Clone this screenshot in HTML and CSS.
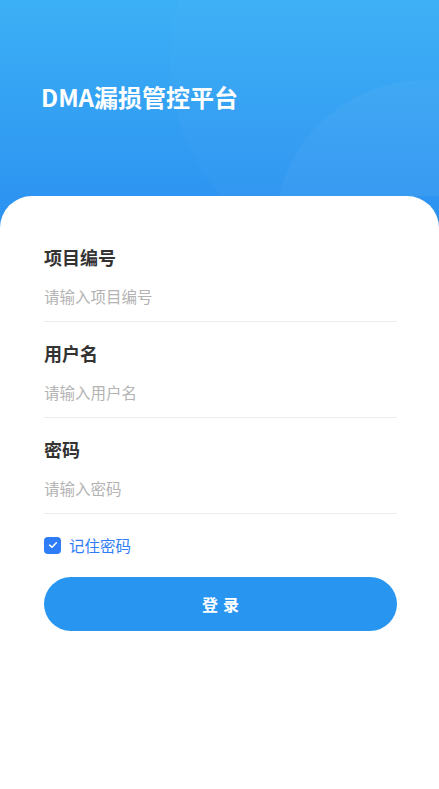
FILE: index.html
```html
<!DOCTYPE html>
<html lang="zh-CN">

<head>
    <meta charset="UTF-8">
    <meta name="viewport" content="width=device-width, initial-scale=1.0">
    <title>DMA漏损管控平台</title>
    <link rel="stylesheet" href="styles.css">
</head>

<body>
    <div class="login-page">
        <header class="banner">
            <div class="banner-circle circle-a"></div>
            <div class="banner-circle circle-b"></div>
            <h1 class="banner-title">DMA漏损管控平台</h1>
        </header>
        <main class="login-card">
            <form class="login-form" onsubmit="return false;">
                <div class="field">
                    <label class="field-label" for="project">项目编号</label>
                    <input class="field-input" id="project" type="text" placeholder="请输入项目编号">
                </div>
                <div class="field">
                    <label class="field-label" for="username">用户名</label>
                    <input class="field-input" id="username" type="text" placeholder="请输入用户名">
                </div>
                <div class="field">
                    <label class="field-label" for="password">密码</label>
                    <input class="field-input" id="password" type="password" placeholder="请输入密码">
                </div>
                <label class="remember">
                    <span class="checkbox">
                        <svg viewBox="0 0 16 16" width="12" height="12">
                            <path d="M3.5 8.2 L6.6 11 L12.5 5" fill="none" stroke="#fff" stroke-width="2" stroke-linecap="round" stroke-linejoin="round" />
                        </svg>
                    </span>
                    <span class="remember-text">记住密码</span>
                </label>
                <button class="login-btn" type="submit">登录</button>
            </form>
        </main>
    </div>
</body>

</html>
```

FILE: styles.css
```css
* {
    margin: 0;
    padding: 0;
    box-sizing: border-box;
}

body {
    font-family: "Noto Sans CJK SC", "Noto Sans", sans-serif;
    background: #fff;
    color: #333;
}

.login-page {
    min-height: 789px;
    display: flex;
    flex-direction: column;
    background-color: #fff;
    background-image: linear-gradient(180deg, #3cb0f6 0%, #2a8ff0 100%);
    background-size: 100% 240px;
    background-repeat: no-repeat;
}

.banner {
    position: relative;
    height: 196px;
    overflow: hidden;
    padding: 80px 41px 0;
}

.banner-circle {
    position: absolute;
    border-radius: 50%;
    background: rgba(255, 255, 255, 0.02);
}

.circle-a {
    width: 420px;
    height: 420px;
    left: 170px;
    top: -150px;
}

.circle-b {
    width: 300px;
    height: 300px;
    left: 275px;
    top: 80px;
    background: rgba(255, 255, 255, 0.035);
}

.banner-title {
    position: relative;
    color: #fff;
    font-size: 24px;
    font-weight: 700;
    line-height: 34px;
    letter-spacing: 0;
}

.login-card {
    flex: 1;
    background: #fff;
    border-radius: 32px 32px 0 0;
    padding: 49px 42px 0 44px;
}

.field {
    margin-bottom: 19px;
    border-bottom: 1px solid #ececec;
}

.field-label {
    display: block;
    font-size: 18px;
    font-weight: 700;
    line-height: 24px;
    color: #333;
}

.field-input {
    display: block;
    width: 100%;
    height: 50px;
    margin-top: 2px;
    border: none;
    outline: none;
    font-family: inherit;
    font-size: 15.5px;
    color: #333;
    background: transparent;
}

.field-input::placeholder {
    color: #b3b3b3;
}

.remember {
    display: flex;
    align-items: center;
    gap: 8px;
    height: 24px;
    cursor: pointer;
}

.checkbox {
    width: 17px;
    height: 17px;
    border-radius: 4px;
    background: #2f7df6;
    display: flex;
    align-items: center;
    justify-content: center;
}

.remember-text {
    font-size: 15.5px;
    color: #2f7df6;
}

.login-btn {
    display: block;
    width: 100%;
    height: 54px;
    margin-top: 20px;
    border: none;
    border-radius: 27px;
    background: #2896f1;
    color: #fff;
    font-family: inherit;
    font-size: 16px;
    font-weight: 700;
    letter-spacing: 5px;
    padding-left: 5px;
    cursor: pointer;
}
```
